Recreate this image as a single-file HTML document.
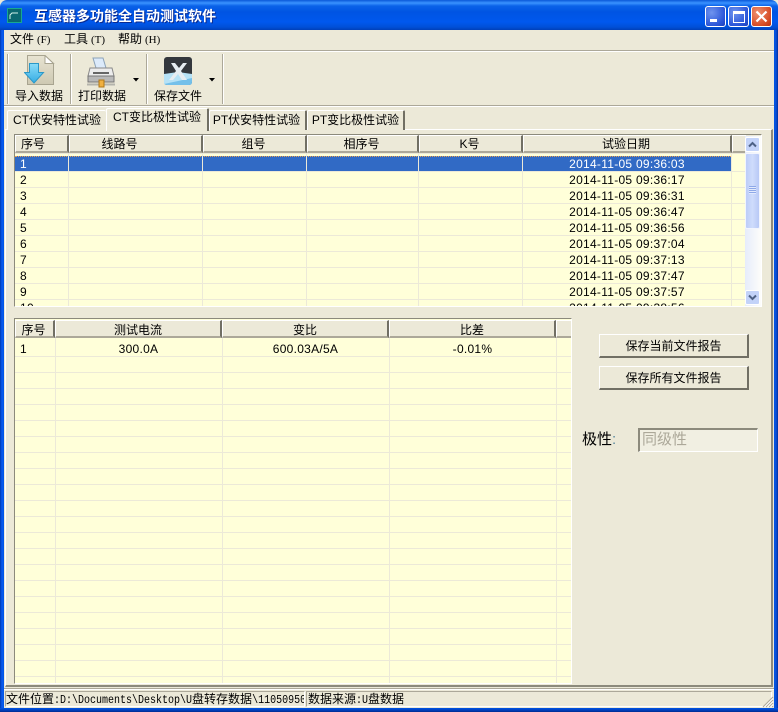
<!DOCTYPE html>
<html><head><meta charset="utf-8">
<style>
html,body{margin:0;padding:0;width:778px;height:712px;overflow:hidden;background:#ece9d8}
*{box-sizing:border-box}
body{position:relative;font:12px "WenQuanYi Zen Hei","Liberation Sans","Noto Sans CJK SC",sans-serif;color:#000}
.a{position:absolute;white-space:nowrap}
.t{position:absolute;white-space:nowrap;line-height:16px;height:16px}
.c{text-align:center}
.h{position:absolute;background:#ece9d8;text-align:center;line-height:17px;height:18px;border-right:2px solid #716f64;border-bottom:2px solid #aca899;border-top:1px solid #fff;border-left:1px solid #fff}
.n{font-family:"Liberation Sans",sans-serif;color:#000;font-size:12px;letter-spacing:.27px}
.tab{position:absolute;background:#ece9d8;border:1px solid #fff;border-right:2px solid #716f64;border-bottom:0;text-align:center;line-height:18px;height:20px;top:110px;border-radius:2px 2px 0 0}
.btn{position:absolute;left:599px;width:150px;height:24px;background:#ece9d8;border:1px solid #fff;border-right:2px solid #716f64;border-bottom:2px solid #716f64;text-align:center;line-height:23px}
.sep{position:absolute;top:54px;height:50px;width:2px;background:linear-gradient(90deg,#aca899 50%,#fff 50%)}
.cap{position:absolute;top:6px;width:21px;height:21px;border:1px solid #fff;border-radius:3px}
.m{font:11px/16px "Liberation Serif",serif;margin-left:3px}
.l{display:inline-block;font:10px/14px "Liberation Mono",monospace;transform:scaleY(1.2);transform-origin:50% 60%}
.v{position:absolute;width:1px;background:#ece9d8}
</style></head><body>

<!-- title bar -->
<div class="a" style="left:0;top:0;width:778px;height:30px;border-radius:7px 7px 0 0;background:linear-gradient(180deg,#0a58d8 0,#3a93ff 3px,#0a62e8 6px,#0054e3 12px,#0058ee 22px,#0050d8 27px,#0040b8 30px)"></div>
<div class="a" style="left:0;top:30px;width:4px;height:682px;background:linear-gradient(90deg,#0038b0,#0a5cf0 2px,#0055e5)"></div>
<div class="a" style="right:0;top:30px;width:4px;height:682px;background:linear-gradient(90deg,#0055e5,#0a50d8 2px,#0030a0)"></div>
<div class="a" style="left:0;top:708px;width:778px;height:4px;background:linear-gradient(180deg,#0055e5,#0040c0 2px,#002a90)"></div>
<svg class="a" style="left:7px;top:8px" width="15" height="15" viewBox="0 0 15 15"><rect width="15" height="15" fill="#18a890"/><rect x="1" y="1" width="13" height="13" fill="#0a6870"/><path d="M3 11 L3 7 L5 5 L11 5" stroke="#d0f0e8" fill="none"/></svg>
<div class="a" style="left:35px;top:9px;font-size:14px;line-height:16px;font-weight:bold;color:#0a2a90;">互感器多功能全自动测试软件</div>
<div class="a" style="left:34px;top:8px;font-size:14px;line-height:16px;font-weight:bold;color:#fff">互感器多功能全自动测试软件</div>

<div class="cap" style="left:705px;background:radial-gradient(circle at 30% 30%,#6f94ee,#2a55d8 70%,#1c3fb8)"><div class="a" style="left:4px;top:12px;width:7px;height:3px;background:#fff"></div></div>
<div class="cap" style="left:728px;background:radial-gradient(circle at 30% 30%,#6f94ee,#2a55d8 70%,#1c3fb8)"><div class="a" style="left:4px;top:4px;width:12px;height:12px;border:1px solid #fff;border-top:3px solid #fff"></div></div>
<div class="cap" style="left:751px;background:radial-gradient(circle at 30% 30%,#ee9070,#d8502a 65%,#b83010)"><svg class="a" style="left:3px;top:3px" width="13" height="13" viewBox="0 0 13 13"><path d="M1.500 1.500 L11.500 11.500 M11.500 1.500 L1.500 11.500" stroke="#fff" stroke-width="2.200"/></svg></div>

<!-- menu -->
<div class="t" style="left:10px;top:31px">文件<span class="m">(F)</span></div>
<div class="t" style="left:64px;top:31px">工具<span class="m">(T)</span></div>
<div class="t" style="left:118px;top:31px">帮助<span class="m">(H)</span></div>
<div class="a" style="left:4px;top:50px;width:770px;height:2px;background:linear-gradient(180deg,#aca899 50%,#fff 50%)"></div>

<!-- toolbar -->
<div class="sep" style="left:7px"></div>
<div class="sep" style="left:70px"></div>
<div class="sep" style="left:146px"></div>
<div class="sep" style="left:222px"></div>
<div class="a" style="left:4px;top:105px;width:770px;height:2px;background:linear-gradient(180deg,#aca899 50%,#fff 50%)"></div>

<svg class="a" style="left:24px;top:55px" width="31" height="31" viewBox="0 0 31 31">
<defs><linearGradient id="pg" x1="0" y1="0" x2="0" y2="1"><stop offset="0" stop-color="#e8e4d2"/><stop offset="1" stop-color="#cdc8b2"/></linearGradient><linearGradient id="ar" x1="0" y1="0" x2="0" y2="1"><stop offset="0" stop-color="#8adcf8"/><stop offset="1" stop-color="#35ace4"/></linearGradient></defs>
<path d="M3.500 .5H21L29.500 8.500V29.500H3.500Z" fill="url(#pg)" stroke="#a8a490"/><path d="M21 .5V8.500H29.500Z" fill="#fff" stroke="#a8a490"/>
<path d="M5.500 8.500H14.500V17.500H19.500L10 28L.5 17.500H5.500Z" fill="url(#ar)" stroke="#2a98c8"/></svg>
<svg class="a" style="left:87px;top:57px" width="29" height="31" viewBox="0 0 29 31">
<path d="M6 1H16L19 11H9Z" fill="#dceafa" stroke="#8ca2b8"/><path d="M3 11H25L27 19H1Z" fill="#ececec" stroke="#888"/><rect x="1" y="19" width="26" height="6" fill="#b8b8b8" stroke="#777"/><rect x="6" y="15" width="16" height="2" fill="#666"/>
<path d="M0 27.500H28" stroke="#b4b4ac" stroke-width="2"/><rect x="12" y="23" width="5" height="7" fill="#f0b040" stroke="#b07818"/></svg>
<svg class="a" style="left:164px;top:57px" width="28" height="28" viewBox="0 0 28 28">
<rect width="28" height="28" rx="3" fill="#33373d"/><path d="M0 17H28V25Q28 28 25 28H3Q0 28 0 25Z" fill="#74c0ea"/><path d="M0 17L14 15 L28 17 V21 L0 27Z" fill="#b6e2f6"/>
<path d="M7 6H11L15 11L19 6H23L17 14L23 23H18L14 17L9 23H5L12 14Z" fill="#e6edf2"/></svg>
<div class="t" style="left:15px;top:88px">导入数据</div>
<div class="t" style="left:78px;top:88px">打印数据</div>
<div class="t" style="left:154px;top:88px">保存文件</div>
<svg class="a" style="left:133px;top:78px" width="6" height="4"><path d="M0 0H6L3 3.500Z" fill="#000"/></svg>
<svg class="a" style="left:209px;top:78px" width="6" height="4"><path d="M0 0H6L3 3.500Z" fill="#000"/></svg>

<!-- tab page -->
<div class="a" style="left:5px;top:129px;width:768px;height:558px;border:1px solid #fff;border-right:2px solid #8c8a7c;border-bottom:2px solid #8c8a7c"></div>
<div class="tab" style="left:7px;width:99px;border-right:0;">CT伏安特性试验</div>
<div class="tab" style="left:209px;width:98px;padding-right:2px">PT伏安特性试验</div>
<div class="tab" style="left:307px;width:98px">PT变比极性试验</div>
<div class="tab" style="left:106px;width:103px;top:108px;height:23px;line-height:17px;z-index:2">CT变比极性试验</div>

<!-- grid 1 -->
<div class="a" style="left:14px;top:134px;width:748px;height:173px;background:#ece9d8;border:1px solid #8c8a7c;border-right:1px solid #fff;border-bottom:1px solid #fff;overflow:hidden">
 <div class="a" style="left:0;top:19px;width:730px;height:153px;background:#ffffd9"></div>
 <div class="a" style="left:0;top:21px;width:730px;height:151px;background:repeating-linear-gradient(180deg,transparent 0,transparent 15px,#ece9d8 15px,#ece9d8 16px)"></div>
 <div class="v" style="left:53px;top:19px;height:153px"></div>
 <div class="v" style="left:187px;top:19px;height:153px"></div>
 <div class="v" style="left:291px;top:19px;height:153px"></div>
 <div class="v" style="left:403px;top:19px;height:153px"></div>
 <div class="v" style="left:507px;top:19px;height:153px"></div>
 <div class="v" style="left:716px;top:19px;height:153px"></div>
 <div class="a" style="left:0;top:21px;width:716px;height:15px;background:#316ac5;border-top:1px dotted #e8a050"></div>
 <div class="v" style="left:53px;top:21px;height:15px"></div>
 <div class="v" style="left:187px;top:21px;height:15px"></div>
 <div class="v" style="left:291px;top:21px;height:15px"></div>
 <div class="v" style="left:403px;top:21px;height:15px"></div>
 <div class="v" style="left:507px;top:21px;height:15px"></div>

 <div class="h" style="left:0;top:0;width:54px;padding-right:17px">序号</div>
 <div class="h" style="left:54px;top:0;width:134px;padding-right:32px">线路号</div>
 <div class="h" style="left:188px;top:0;width:104px;padding-right:2px">组号</div>
 <div class="h" style="left:292px;top:0;width:112px;padding-right:2px">相序号</div>
 <div class="h" style="left:404px;top:0;width:104px;padding-right:2px">K号</div>
 <div class="h" style="left:508px;top:0;width:209px;padding-right:2px">试验日期</div>
 <div class="h" style="left:717px;top:0;width:14px;border-right:0"></div>

 <div class="t n" style="left:5px;top:21px;color:#fff">1</div><div class="t n c" style="left:508px;top:21px;width:208px;color:#fff">2014-11-05 09:36:03</div>
 <div class="t n" style="left:5px;top:37px">2</div><div class="t n c" style="left:508px;top:37px;width:208px">2014-11-05 09:36:17</div>
 <div class="t n" style="left:5px;top:53px">3</div><div class="t n c" style="left:508px;top:53px;width:208px">2014-11-05 09:36:31</div>
 <div class="t n" style="left:5px;top:69px">4</div><div class="t n c" style="left:508px;top:69px;width:208px">2014-11-05 09:36:47</div>
 <div class="t n" style="left:5px;top:85px">5</div><div class="t n c" style="left:508px;top:85px;width:208px">2014-11-05 09:36:56</div>
 <div class="t n" style="left:5px;top:101px">6</div><div class="t n c" style="left:508px;top:101px;width:208px">2014-11-05 09:37:04</div>
 <div class="t n" style="left:5px;top:117px">7</div><div class="t n c" style="left:508px;top:117px;width:208px">2014-11-05 09:37:13</div>
 <div class="t n" style="left:5px;top:133px">8</div><div class="t n c" style="left:508px;top:133px;width:208px">2014-11-05 09:37:47</div>
 <div class="t n" style="left:5px;top:149px">9</div><div class="t n c" style="left:508px;top:149px;width:208px">2014-11-05 09:37:57</div>
 <div class="t n" style="left:5px;top:165px">10</div><div class="t n c" style="left:508px;top:165px;width:208px">2014-11-05 09:38:56</div>

 <!-- scrollbar -->
 <div class="a" style="left:730px;top:1px;width:16px;height:171px;background:linear-gradient(90deg,#e6ecfb,#fdfdfa)"></div>
 <div class="a" style="left:730px;top:2px;width:15px;height:15px;background:#c3d3f9;border:1px solid #fff;border-radius:2px"><svg class="a" style="left:2px;top:3px" width="9" height="7"><path d="M1 5.500L4.500 2L8 5.500" fill="none" stroke="#4d6185" stroke-width="2"/></svg></div>
 <div class="a" style="left:730px;top:18px;width:15px;height:76px;background:linear-gradient(90deg,#bccdf8,#cfdcfc 50%,#b8c9f6);border:1px solid #f2f5fe;border-radius:2px"><div class="a" style="left:3px;top:32px;width:7px;height:8px;background:repeating-linear-gradient(180deg,#8ea8e8 0,#8ea8e8 1px,#e2eafd 1px,#e2eafd 2px)"></div></div>
 <div class="a" style="left:730px;top:155px;width:15px;height:15px;background:#c3d3f9;border:1px solid #fff;border-radius:2px"><svg class="a" style="left:2px;top:3px" width="9" height="7"><path d="M1 1.500L4.500 5L8 1.500" fill="none" stroke="#4d6185" stroke-width="2"/></svg></div>
</div>

<!-- grid 2 -->
<div class="a" style="left:14px;top:318px;width:558px;height:366px;background:#ffffd9;border:1px solid #8c8a7c;border-right:1px solid #fff;border-bottom:1px solid #fff;overflow:hidden">
 <div class="a" style="left:0;top:22px;width:556px;height:343px;background:repeating-linear-gradient(180deg,transparent 0,transparent 15px,#ece9d8 15px,#ece9d8 16px)"></div>
 <div class="v" style="left:40px;top:19px;height:346px"></div>
 <div class="v" style="left:207px;top:19px;height:346px"></div>
 <div class="v" style="left:374px;top:19px;height:346px"></div>
 <div class="v" style="left:541px;top:19px;height:346px"></div>
 <div class="h" style="left:0;top:1px;width:40px;line-height:18px;padding-right:2px">序号</div>
 <div class="h" style="left:40px;top:1px;width:167px;line-height:18px">测试电流</div>
 <div class="h" style="left:207px;top:1px;width:167px;line-height:18px">变比</div>
 <div class="h" style="left:374px;top:1px;width:167px;line-height:18px">比差</div>
 <div class="h" style="left:541px;top:1px;width:15px;border-right:0"></div>
 <div class="t n" style="left:5px;top:22px">1</div>
 <div class="t n c" style="left:40px;top:22px;width:167px">300.0A</div>
 <div class="t n c" style="left:207px;top:22px;width:167px">600.03A/5A</div>
 <div class="t n c" style="left:374px;top:22px;width:167px">-0.01%</div>
</div>

<!-- right panel -->
<div class="btn" style="top:334px">保存当前文件报告</div>
<div class="btn" style="top:366px">保存所有文件报告</div>
<div class="a" style="left:582px;top:432px;font-size:15px;line-height:16px">极性<span style="color:#5a8aa0">:</span></div>
<div class="a" style="left:638px;top:428px;width:120px;height:24px;background:#f1efe2;border:1px solid #fff;border-left:2px solid #8c8a7c;border-top:2px solid #8c8a7c;color:#aca899;font-size:15px;line-height:20px;padding-left:2px">同级性</div>

<!-- status bar -->
<div class="a" style="left:4px;top:688px;width:770px;height:2px;background:linear-gradient(180deg,#aca899 50%,#fff 50%)"></div>
<div class="a" style="left:5px;top:691px;width:300px;height:16px;border:1px solid #fff;border-left:1px solid #aca899;border-top:1px solid #aca899;overflow:hidden;line-height:14px">文件位置<span class="l">:D:\Documents\Desktop\U</span>盘转存数据<span class="l">\11050950</span></div>
<div class="a" style="left:306px;top:691px;width:466px;height:16px;border:1px solid #fff;border-left:1px solid #aca899;border-top:1px solid #aca899;overflow:hidden;line-height:14px;padding-left:1px">数据来源<span class="l">:U</span>盘数据</div>
<svg class="a" style="left:762px;top:696px" width="12" height="12"><path d="M11 1L1 11M11 4L4 11M11 7L7 11M11 10L10 11" stroke="#aca899" stroke-width="1.200"/><path d="M11 2.500L2.500 11M11 5.500L5.500 11M11 8.500L8.500 11" stroke="#fff"/></svg>
</body></html>
